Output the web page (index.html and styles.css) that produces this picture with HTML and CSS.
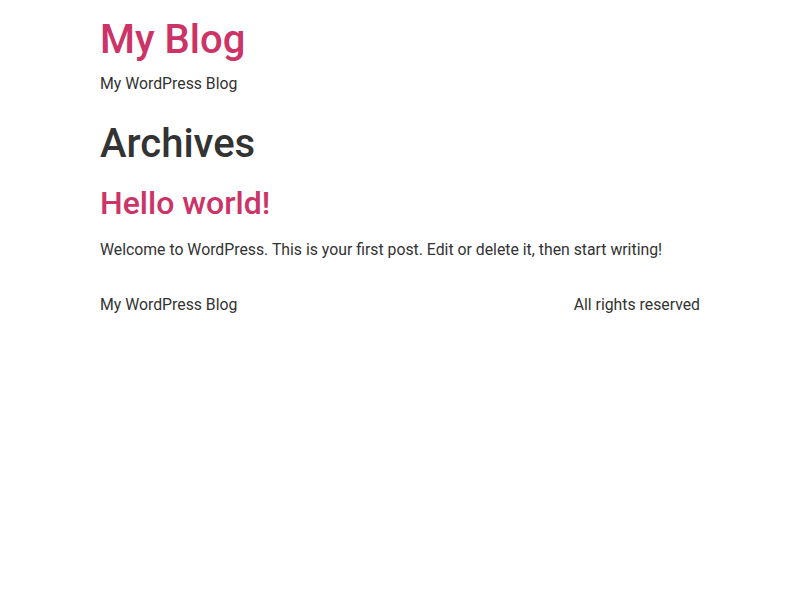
FILE: index.html
```html
<!DOCTYPE html>
<html lang="en">
  <head>
    <meta charset="utf-8" />
    <title>Archives – My Blog</title>
    <link rel="stylesheet" href="styles.css">
  </head>
  <body>
    <div class="site">
      <header class="site-header">
        <a class="site-title" href="#">My Blog</a>
        <p class="site-description">My WordPress Blog</p>
      </header>

      <main class="site-main">
        <h1 class="page-title">Archives</h1>
        <article class="post">
          <h2 class="post-title"><a href="#">Hello world!</a></h2>
          <p class="post-excerpt">
            Welcome to WordPress. This is your first post. Edit or delete it, then start writing!
          </p>
        </article>
      </main>

      <footer class="site-footer">
        <span>My WordPress Blog</span>
        <span>All rights reserved</span>
      </footer>
    </div>
  </body>
</html>
```

FILE: styles.css
```css
body {
  margin: 0;
  background: #fff;
  color: #333;
  font-family: Roboto, "Noto Sans", sans-serif;
  font-size: 15.8px;
  line-height: 24px;
}
a {
  color: #cc3366;
  text-decoration: none;
}
.site {
  max-width: 600px;
  margin: 0 auto;
}
.site-header {
  padding-top: 16px;
}
.site-title {
  display: block;
  font-size: 40px;
  font-weight: 500;
  line-height: 1.2;
}
.site-description {
  margin: 8px 0 0;
}
.page-title {
  margin: 24px 0 0;
  font-size: 40px;
  font-weight: 500;
  line-height: 1.2;
}
.post-title {
  margin: 16px 0 0;
  font-size: 32px;
  font-weight: 500;
  line-height: 1.2;
}
.post-excerpt {
  margin: 16px 0 0;
}
.site-footer {
  display: flex;
  justify-content: space-between;
  margin-top: 31px;
}
```
